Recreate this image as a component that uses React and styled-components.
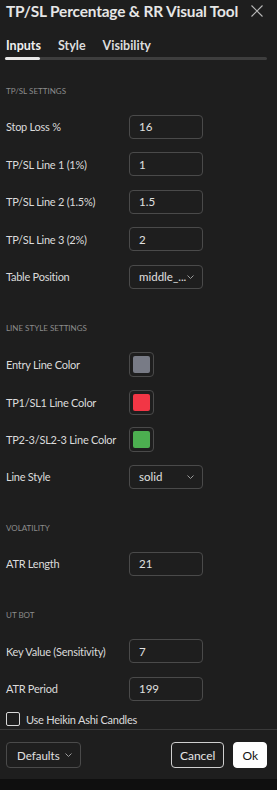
import React from 'react'
import styled, { createGlobalStyle } from 'styled-components'

const GlobalStyle = createGlobalStyle`
    html, body {
        margin: 0;
        padding: 0;
        background: #0f0f0f;
    }

    body {
        font-family: Lato, "Open Sans", "Liberation Sans", sans-serif;
        color: #dbdbdb;
    }
`;

const Dialog = styled.div`
    width: 277px;
    height: 779px;
    background: #1e1e1e;
    display: flex;
    flex-direction: column;
    overflow: hidden;
`;

const Header = styled.header`
    display: flex;
    align-items: center;
    justify-content: space-between;
    padding: 1px 14px 0 6px;
    height: 19px;
`;

const Title = styled.h1`
    margin: 0;
    font-size: 15.4px;
    font-weight: 700;
    color: #e6e6e6;
    white-space: nowrap;
    letter-spacing: -0.15px;
`;

const CloseBtn = styled.button`
    flex: none;
    border: none;
    background: none;
    padding: 0;
    width: 12px;
    height: 12px;
    display: flex;
    color: #b8b8b8;
`;

const Tabs = styled.nav`
    display: flex;
    gap: 17px;
    padding: 18px 6px 0;
    height: 14px;
    align-items: center;
`;

const Tab = styled.span`
    font-size: 12.5px;
    font-weight: 700;
    color: ${p => (p.$active ? '#f0f0f0' : '#dcdcdc')};
`;

const TabTrack = styled.div`
    margin: 5px 10px 0 5px;
    height: 3px;
    border-radius: 2px;
    background: #3e3e3e;
    display: flex;
`;

const TabIndicator = styled.div`
    width: 35px;
    height: 3px;
    border-radius: 2px;
    background: #e8e8e8;
`;

const Body = styled.div`
    flex: 1;
    padding: 24.5px 6px 0;
    display: flex;
    flex-direction: column;
    gap: 33px;
`;

const Section = styled.section`
    display: flex;
    flex-direction: column;
    gap: 13.6px;
`;

const SectionTitle = styled.h2`
    margin: 0 0 4.5px;
    height: 12px;
    line-height: 12px;
    font-size: 8px;
    font-weight: 400;
    color: #8c8c8c;
    text-transform: uppercase;
`;

const Row = styled.div`
    display: grid;
    grid-template-columns: 123px auto;
    align-items: center;
    height: 24px;
`;

const Label = styled.label`
    font-size: 11px;
    letter-spacing: -0.25px;
    color: #dbdbdb;
    white-space: nowrap;
`;

const Input = styled.input`
    box-sizing: border-box;
    width: 74px;
    height: 24px;
    padding: 0 9px;
    font: inherit;
    font-size: 11.5px;
    color: #e0e0e0;
    background: transparent;
    border: 1px solid #4a4a4a;
    border-radius: 4px;
    outline: none;
`;

const SelectBox = styled.div`
    box-sizing: border-box;
    width: ${p => p.$width || 74}px;
    height: ${p => p.$height || 24}px;
    padding: 0 8px 0 ${p => p.$padLeft || 9}px;
    display: flex;
    align-items: center;
    justify-content: space-between;
    font-size: 11.5px;
    color: #e0e0e0;
    border: 1px solid #4a4a4a;
    border-radius: 4px;
`;

const Chevron = styled.svg`
    width: 7px;
    height: 4px;
    color: #9a9a9a;
`;

const Swatch = styled.div`
    box-sizing: border-box;
    width: 25px;
    height: 25px;
    padding: 3px;
    border: 1px solid #4a4a4a;
    border-radius: 4px;
`;

const SwatchFill = styled.div`
    width: 100%;
    height: 100%;
    border-radius: 2px;
    background: ${p => p.$color};
`;

const CheckRow = styled.label`
    display: flex;
    align-items: center;
    gap: 6px;
    padding-left: 6px;
    margin-top: 9px;
    font-size: 11px;
    letter-spacing: -0.25px;
    color: #dbdbdb;
`;

const CheckBox = styled.span`
    box-sizing: border-box;
    width: 14px;
    height: 14px;
    border: 1px solid #d8d8d8;
    border-radius: 2px;
`;

const Footer = styled.footer`
    margin-top: 3px;
    border-top: 1px solid #3a3a3a;
    padding: 12px 10px 11px 6px;
    display: flex;
    align-items: center;
    gap: 9px;
`;

const Spacer = styled.div`
    flex: 1;
`;

const Button = styled.button`
    box-sizing: border-box;
    height: 26px;
    padding: 0 8px;
    font: inherit;
    font-size: 12px;
    border-radius: 4px;
    border: 1px solid ${p => (p.$primary ? '#ffffff' : '#cfcfcf')};
    background: ${p => (p.$primary ? '#ffffff' : 'transparent')};
    color: ${p => (p.$primary ? '#131313' : '#e6e6e6')};
`;

function ChevronDown() {
    return (
        <Chevron viewBox="0 0 7 4" fill="none">
            <path d="M0.5 0.5 L3.5 3.5 L6.5 0.5" stroke="currentColor" strokeWidth="1" />
        </Chevron>
    );
}

const sections = [
    {
        title: 'TP/SL Settings',
        rows: [
            { label: 'Stop Loss %', value: '16' },
            { label: 'TP/SL Line 1 (1%)', value: '1' },
            { label: 'TP/SL Line 2 (1.5%)', value: '1.5' },
            { label: 'TP/SL Line 3 (2%)', value: '2' },
            { label: 'Table Position', select: 'middle_...' },
        ],
    },
    {
        title: 'Line Style Settings',
        rows: [
            { label: 'Entry Line Color', color: '#787b86' },
            { label: 'TP1/SL1 Line Color', color: '#f23645' },
            { label: 'TP2-3/SL2-3 Line Color', color: '#4caf50' },
            { label: 'Line Style', select: 'solid' },
        ],
    },
    {
        title: 'Volatility',
        rows: [{ label: 'ATR Length', value: '21' }],
    },
    {
        title: 'UT Bot',
        rows: [
            { label: 'Key Value (Sensitivity)', value: '7' },
            { label: 'ATR Period', value: '199' },
        ],
    },
];

function Field({ row }) {
    if (row.color) {
        return (
            <Swatch>
                <SwatchFill $color={row.color} />
            </Swatch>
        );
    }
    if (row.select) {
        return (
            <SelectBox>
                <span>{row.select}</span>
                <ChevronDown />
            </SelectBox>
        );
    }
    return <Input defaultValue={row.value} />;
}

export default function App() {
    return (
        <>
            <GlobalStyle />
            <Dialog>
                <Header>
                    <Title>TP/SL Percentage &amp; RR Visual Tool</Title>
                    <CloseBtn aria-label="Close">
                        <svg viewBox="0 0 12 12" width="12" height="12" fill="none">
                            <path d="M0.5 0.5 L11.5 11.5 M11.5 0.5 L0.5 11.5" stroke="currentColor" strokeWidth="1.1" />
                        </svg>
                    </CloseBtn>
                </Header>
                <Tabs>
                    <Tab $active>Inputs</Tab>
                    <Tab>Style</Tab>
                    <Tab>Visibility</Tab>
                </Tabs>
                <TabTrack>
                    <TabIndicator />
                </TabTrack>
                <Body>
                    {sections.map(section => (
                        <Section key={section.title}>
                            <SectionTitle>{section.title}</SectionTitle>
                            {section.rows.map(row => (
                                <Row key={row.label}>
                                    <Label>{row.label}</Label>
                                    <Field row={row} />
                                </Row>
                            ))}
                        </Section>
                    ))}
                </Body>
                <CheckRow>
                    <CheckBox />
                    Use Heikin Ashi Candles
                </CheckRow>
                <Footer>
                    <SelectBox $width={75} $height={26} $padLeft={10}>
                        <span>Defaults</span>
                        <ChevronDown />
                    </SelectBox>
                    <Spacer />
                    <Button>Cancel</Button>
                    <Button $primary>Ok</Button>
                </Footer>
            </Dialog>
        </>
    );
}
